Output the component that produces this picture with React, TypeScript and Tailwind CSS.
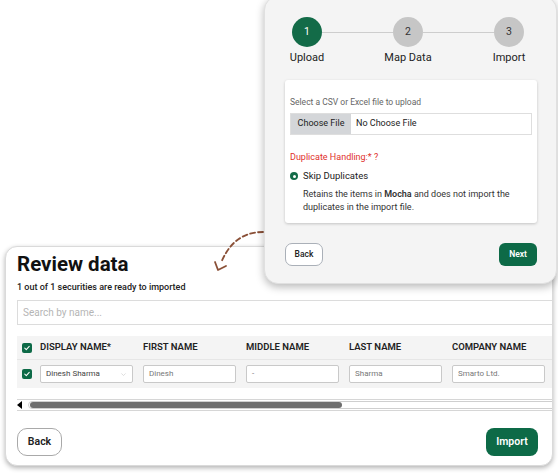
import React from "react";

const columns = [
  { label: "DISPLAY NAME*", value: "Dinesh Sharma", select: true },
  { label: "FIRST NAME", value: "Dinesh" },
  { label: "MIDDLE NAME", value: "-" },
  { label: "LAST NAME", value: "Sharma" },
  { label: "COMPANY NAME", value: "Smarto Ltd." },
];

function Check() {
  return (
    <span className="flex h-[10px] w-[10px] shrink-0 items-center justify-center rounded-[2px] bg-[#0d6a47]">
      <svg viewBox="0 0 10 10" className="h-[8px] w-[8px]" fill="none">
        <path d="M2.2 5.2 4.1 7 7.8 3" stroke="#fff" strokeWidth="1.3" strokeLinecap="round" strokeLinejoin="round" />
      </svg>
    </span>
  );
}

function Step({ n, active }: { n: number; active?: boolean }) {
  return (
    <div
      className={
        active
          ? "flex h-[30px] w-[30px] shrink-0 items-center justify-center rounded-full bg-[#136b48] text-[10.5px] text-white"
          : "flex h-[30px] w-[30px] shrink-0 items-center justify-center rounded-full bg-[#c6c6c6] text-[10.5px] text-[#333]"
      }
    >
      {n}
    </div>
  );
}

export default function App() {
  return (
    <div className="relative h-[473px] w-[558px] overflow-hidden bg-white font-['Roboto','Liberation_Sans',sans-serif] text-[#1f1f1f]">
      {/* review card */}
      <div className="ml-[5px] mt-[246px] h-[220px] w-[548px] overflow-hidden rounded-xl border border-[#dadada] bg-white px-[11px] pt-[5px] shadow-[0_2px_5px_rgba(0,0,0,0.3)]">
        <h1 className="text-[20.5px] font-bold leading-[25px] text-[#111]">Review data</h1>
        <p className="mt-[4px] text-[9px] font-medium leading-[12px] text-[#222]">
          1 out of 1 securities are ready to imported
        </p>
        <div className="mt-[7px] flex h-[25px] w-[540px] items-center border border-[#dcdcdc] px-[5px] text-[10px] text-[#b5b5b5]">
          Search by name...
        </div>

        <div className="mt-[11px] w-[540px]">
          <div className="flex h-[24px] items-center border-b border-[#e6e6e6] bg-[#f4f4f4] pl-[5px]">
            <Check />
            <div className="ml-[8px] flex gap-[10px]">
              {columns.map((c) => (
                <div key={c.label} className="w-[93px] text-[9.5px] font-semibold text-[#222]">
                  {c.label}
                </div>
              ))}
            </div>
          </div>
          <div className="flex h-[28px] items-center bg-[#f4f4f4] pl-[5px]">
            <Check />
            <div className="ml-[8px] flex gap-[10px]">
              {columns.map((c) => (
                <div
                  key={c.label}
                  className="flex h-[18px] w-[93px] items-center justify-between rounded-[2px] border border-[#c9c9c9] bg-white px-[5px] text-[8px] text-[#777]"
                >
                  <span className={c.select ? "text-[#444]" : ""}>{c.value}</span>
                  {c.select ? (
                    <svg viewBox="0 0 10 10" className="h-[7px] w-[7px]" fill="none">
                      <path d="M2 3.5 5 6.5 8 3.5" stroke="#d0d0d0" strokeWidth="1" />
                    </svg>
                  ) : null}
                </div>
              ))}
            </div>
          </div>
        </div>

        <div className="mt-[11px] flex h-[12px] w-[540px] items-center border-y border-[#d6d6d6]">
          <span className="h-0 w-0 border-y-[4px] border-r-[5px] border-y-transparent border-r-black" />
          <div className="ml-[6px] flex h-[8px] flex-1 items-center rounded-l-full border border-[#cfcfcf] pl-[1px]">
            <div className="h-[6px] w-[312px] rounded-full bg-[#6e6e6e]" />
          </div>
        </div>

        <div className="mt-[17px] flex w-[521px] items-center justify-between">
          <button className="h-[28px] w-[45px] rounded-[10px] border border-[#a9a9a9] bg-white text-[10.5px] font-semibold text-[#222]">
            Back
          </button>
          <button className="h-[28px] w-[52px] rounded-[8px] bg-[#0d6a47] text-[10.5px] font-semibold text-white">
            Import
          </button>
        </div>
      </div>

      {/* dashed arrow */}
      <svg className="absolute left-[210px] top-[225px] h-[52px] w-[60px]" viewBox="0 0 60 52" fill="none">
        <path
          d="M53 7 C38 7 21 13 11 38"
          stroke="#8a5037"
          strokeWidth="1.8"
          strokeDasharray="5 3"
          strokeLinecap="round"
        />
        <path d="M5 37 8 45 16 41" stroke="#8a5037" strokeWidth="1.8" strokeLinecap="round" strokeLinejoin="round" />
      </svg>

      {/* wizard card */}
      <div className="absolute left-[264px] top-[-4px] h-[288px] w-[293px] rounded-[14px] border border-[#e0e0e0] bg-[#f4f4f4] pl-[20px] pr-[19px] pt-[20px] shadow-[0_3px_8px_rgba(0,0,0,0.28)]">
        <div className="flex items-center pl-[7px] pr-[13px]">
          <Step n={1} active />
          <div className="h-px flex-1 bg-[#cdcdcd]" />
          <Step n={2} />
          <div className="h-px flex-1 bg-[#cdcdcd]" />
          <Step n={3} />
        </div>
        <div className="mt-[4px] flex justify-between pl-[7px] pr-[13px] text-[11px] leading-[14px] text-[#222]">
          {["Upload", "Map Data", "Import"].map((l) => (
            <div key={l} className="flex w-[30px] justify-center whitespace-nowrap">
              {l}
            </div>
          ))}
        </div>

        <div className="mt-[15px] h-[143px] rounded-[3px] bg-white px-[5px] pt-[16px] shadow-[0_1px_3px_rgba(0,0,0,0.2)]">
          <p className="text-[8.5px] leading-[12px] text-[#666]">Select a CSV or Excel file to upload</p>
          <div className="mt-[5px] flex h-[22px] items-center border border-[#dedede] text-[9px] text-[#222]">
            <div className="flex h-full w-[60px] items-center justify-center bg-[#d4d6d9]">Choose File</div>
            <span className="ml-[5px]">No Choose File</span>
          </div>
          <p className="mt-[16px] text-[9px] leading-[12px] text-[#e0312b]">Duplicate Handling:* ?</p>
          <div className="mt-[6px] flex items-center gap-[5px]">
            <span className="flex h-[8px] w-[8px] items-center justify-center rounded-full bg-[#136b48]">
              <span className="h-[3px] w-[3px] rounded-full bg-white" />
            </span>
            <span className="text-[9.5px] text-[#222]">Skip Duplicates</span>
          </div>
          <p className="mt-[5px] pl-[13px] text-[9px] leading-[13px] text-[#333]">
            Retains the items in <b className="font-semibold">Mocha</b> and does not import the duplicates in the
            import file.
          </p>
        </div>

        <div className="mt-[20px] flex items-center justify-between">
          <button className="h-[23px] w-[38px] rounded-[7px] border border-[#aab0b8] bg-white text-[8.5px] font-medium text-[#222]">
            Back
          </button>
          <button className="h-[23px] w-[38px] rounded-[6px] bg-[#0d6a47] text-[8.5px] font-semibold text-white">
            Next
          </button>
        </div>
      </div>
    </div>
  );
}
